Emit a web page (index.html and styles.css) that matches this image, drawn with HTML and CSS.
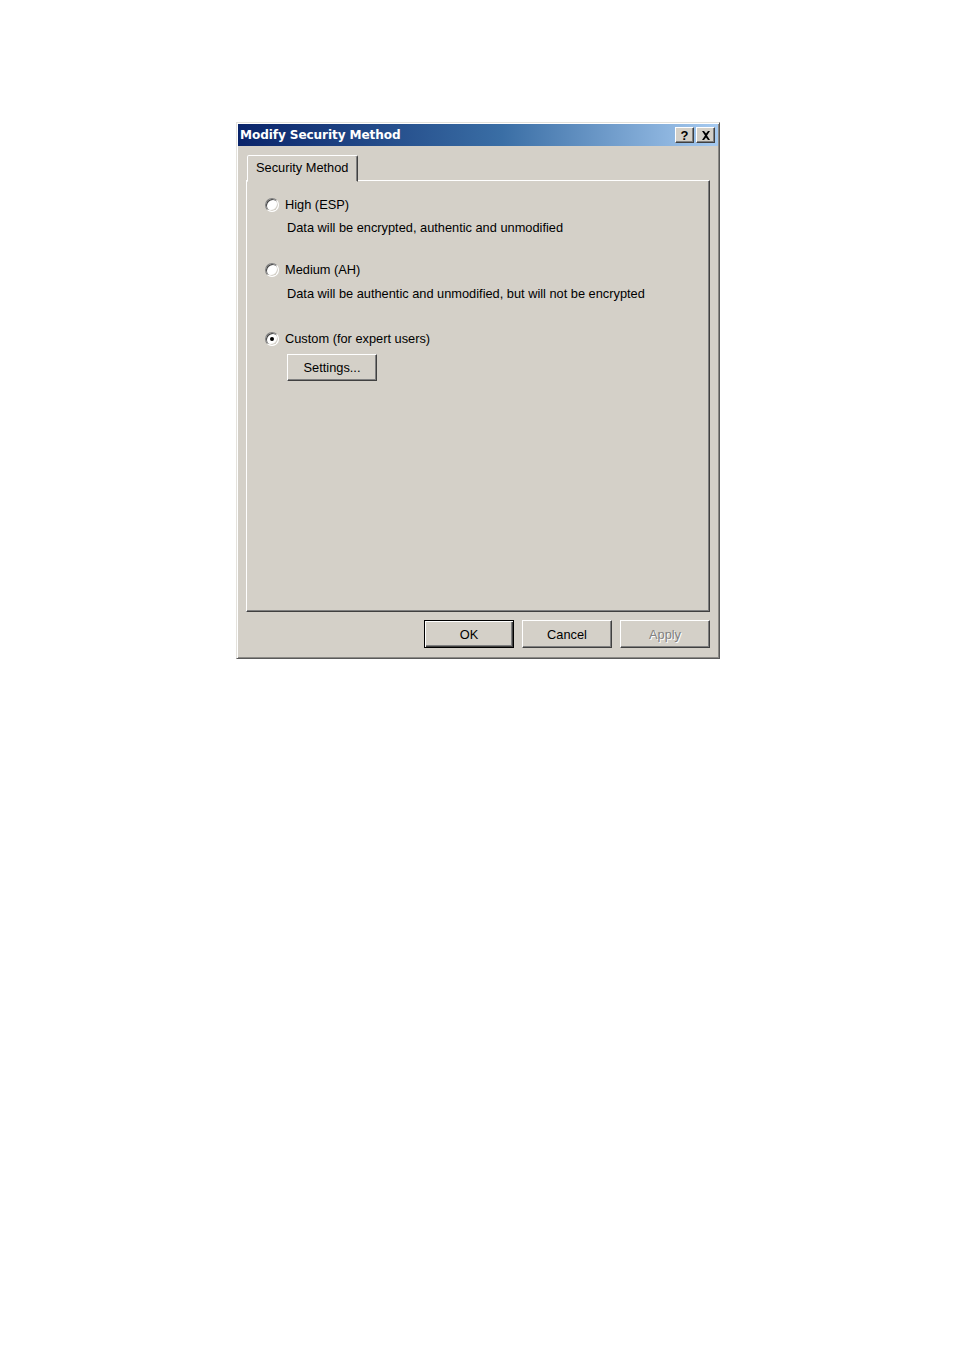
FILE: index.html
```html
<!DOCTYPE html>
<html>
<head>
<meta charset="utf-8">
<link rel="stylesheet" href="styles.css">
</head>
<body>
<div class="dialog">
  <div class="titlebar">
    <span class="title">Modify Security Method</span>
    <div class="tbtns">
      <span class="tbtn q">?</span>
      <span class="tbtn x"><svg width="10" height="9" viewBox="0 0 10 9"><path d="M1 0h2l2 2.5L7 0h2L6 4.5 9 9H7L5 6.5 3 9H1l3-4.5z" fill="#000"/></svg></span>
    </div>
  </div>
  <div class="content">
    <div class="tabs">
      <div class="tab">Security Method</div>
    </div>
    <div class="panel">
      <div class="option">
        <span class="radio"></span><span class="label">High (ESP)</span>
      </div>
      <div class="desc">Data will be encrypted, authentic and unmodified</div>
      <div class="option second">
        <span class="radio"></span><span class="label">Medium (AH)</span>
      </div>
      <div class="desc desc2">Data will be authentic and unmodified, but will not be encrypted</div>
      <div class="option third">
        <span class="radio checked"></span><span class="label">Custom (for expert users)</span>
      </div>
      <div class="btn settings">Settings...</div>
    </div>
    <div class="buttons">
      <div class="btn default">OK</div>
      <div class="btn">Cancel</div>
      <div class="btn disabled">Apply</div>
    </div>
  </div>
</div>
</body>
</html>
```
FILE: styles.css
```css
html, body {
  margin: 0;
  padding: 0;
  background: #ffffff;
}
body {
  padding: 122px 0 0 236px;
  font-family: "Liberation Sans", Arial, sans-serif;
  font-size: 12.8px;
  color: #000;
}
.dialog {
  width: 484px;
  height: 537px;
  box-sizing: border-box;
  background: #d4d0c8;
  border: 1px solid;
  border-color: #e4e2dc #5a5a5a #5a5a5a #e4e2dc;
  box-shadow: inset 1px 1px 0 #ffffff, inset -1px -1px 0 #8c8a86;
  padding: 1px;
  display: flex;
  flex-direction: column;
}
.titlebar {
  height: 22px;
  background: linear-gradient(to right, #0a246a 0%, #3a6ea5 55%, #a6caf0 100%);
  display: flex;
  align-items: center;
  justify-content: space-between;
  padding: 0 3px 0 2px;
}
.title {
  font-family: "DejaVu Sans", Verdana, sans-serif;
  font-weight: bold;
  font-size: 12.1px;
  color: #ffffff;
  letter-spacing: -0.1px;
}
.tbtns {
  display: flex;
  gap: 2px;
}
.tbtn {
  width: 19px;
  height: 16px;
  box-sizing: border-box;
  background: #d4d0c8;
  border: 1px solid;
  border-color: #ffffff #404040 #404040 #ffffff;
  box-shadow: inset -1px -1px 0 #808080;
  display: flex;
  align-items: center;
  justify-content: center;
  font-weight: bold;
  font-size: 13px;
  line-height: 1;
}
.content {
  flex: 1;
  padding: 9px 8px 0 8px;
  display: flex;
  flex-direction: column;
}
.tabs {
  display: flex;
  height: 25px;
  position: relative;
  z-index: 1;
}
.tab {
  width: 111px;
  height: 27px;
  box-sizing: border-box;
  border: 1px solid;
  border-color: #ffffff #404040 transparent #ffffff;
  border-radius: 2px 2px 0 0;
  box-shadow: inset -1px 0 0 #808080;
  background: #d4d0c8;
  padding: 4px 0 0 8px;
  margin-left: 1px;
}
.panel {
  height: 432px;
  box-sizing: border-box;
  border: 1px solid;
  border-color: #ffffff #404040 #404040 #ffffff;
  box-shadow: inset -1px -1px 0 #808080;
  padding: 15px 0 0 18px;
  display: flex;
  flex-direction: column;
  align-items: flex-start;
}
.option {
  display: flex;
  align-items: center;
  gap: 6px;
  height: 17px;
}
.option.second { margin-top: 24px; }
.option.third { margin-top: 27px; }
.radio {
  width: 12px;
  height: 12px;
  border-radius: 50%;
  background: #ffffff;
  border: 1px solid;
  border-color: #808080 #ffffff #ffffff #808080;
  box-shadow: inset 1px 1px 0 #404040, inset -1px -1px 0 #d4d0c8;
  position: relative;
}
.radio.checked::after {
  content: "";
  position: absolute;
  left: 4px;
  top: 4px;
  width: 4px;
  height: 4px;
  border-radius: 50%;
  background: #000;
}
.desc {
  margin: 7px 0 0 22px;
  height: 17px;
}
.desc.desc2 { margin-top: 8px; }
.btn {
  width: 90px;
  height: 28px;
  box-sizing: border-box;
  background: #d4d0c8;
  border: 1px solid;
  border-color: #ffffff #404040 #404040 #ffffff;
  box-shadow: inset -1px -1px 0 #808080;
  display: flex;
  align-items: center;
  justify-content: center;
}
.settings {
  margin: 7px 0 0 22px;
  height: 27px;
}
.buttons {
  display: flex;
  justify-content: flex-end;
  gap: 8px;
  margin-top: 8px;
}
.btn.default {
  border: 1px solid #000;
  box-shadow: inset 1px 1px 0 #ffffff, inset -1px -1px 0 #404040, inset -2px -2px 0 #808080;
}
.btn.disabled {
  color: #808080;
  text-shadow: 1px 1px 0 #ffffff;
}
```
